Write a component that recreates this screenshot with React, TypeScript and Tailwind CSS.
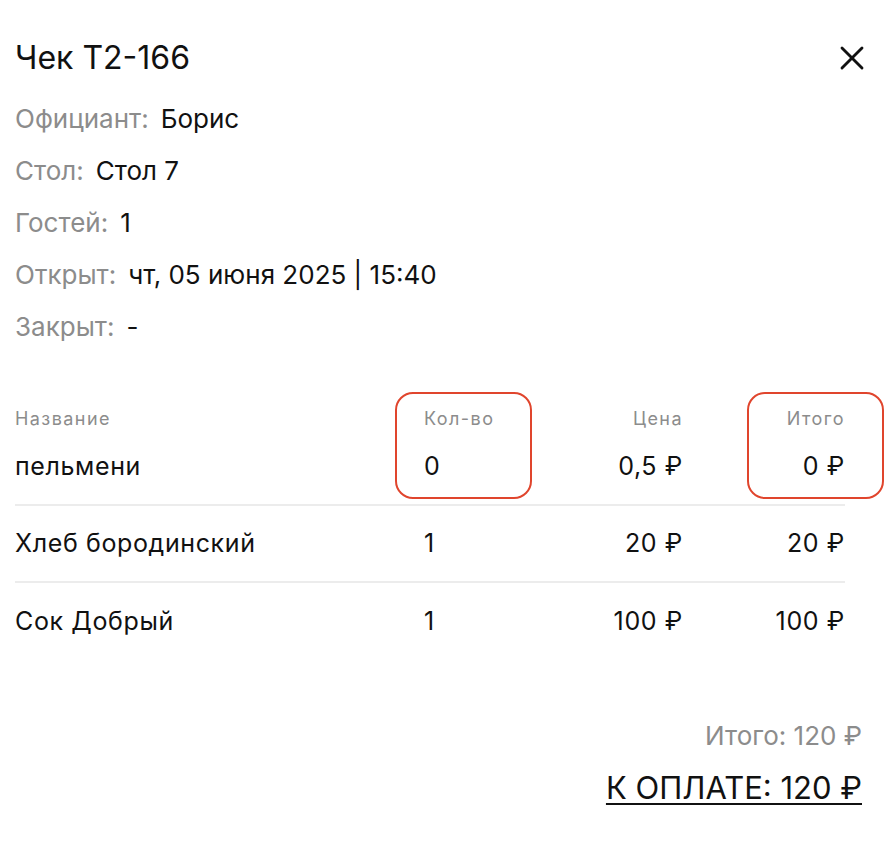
import { X } from 'lucide-react';

const info = [
  { label: 'Официант:', value: 'Борис' },
  { label: 'Стол:', value: 'Стол 7' },
  { label: 'Гостей:', value: '1' },
  { label: 'Открыт:', value: 'чт, 05 июня 2025 | 15:40' },
  { label: 'Закрыт:', value: '-' },
];

const items = [
  { name: 'пельмени', qty: '0', price: '0,5 ₽', total: '0 ₽' },
  { name: 'Хлеб бородинский', qty: '1', price: '20 ₽', total: '20 ₽' },
  { name: 'Сок Добрый', qty: '1', price: '100 ₽', total: '100 ₽' },
];

export default function App() {
  return (
    <div
      className="relative min-h-[854px] w-[886px] bg-white px-[15px] pt-[38px] text-[#111]"
      style={{ fontFamily: 'Inter, "Noto Sans", sans-serif' }}
    >
      {/* Header */}
      <div className="flex h-10 items-center justify-between">
        <h1 className="text-[32px] leading-10">Чек Т2-166</h1>
        <button className="-mr-[1px] text-[#111]" aria-label="Закрыть">
          <X size={40} strokeWidth={1.7} />
        </button>
      </div>

      {/* Meta info */}
      <div className="mt-[14px] flex flex-col">
        {info.map((row) => (
          <div key={row.label} className="flex h-[52px] items-center gap-3 text-[26px]">
            <span className="text-[#8c8c8c]">{row.label}</span>
            <span>{row.value}</span>
          </div>
        ))}
      </div>

      {/* Items table */}
      <div className="relative mt-[53px] w-[830px]">
        <div className="grid h-6 grid-cols-[409px_139px_120px_1fr] items-center text-[18px] tracking-[0.08em] text-[#8c8c8c]">
          <span>Название</span>
          <span>Кол-во</span>
          <span className="text-right">Цена</span>
          <span className="text-right">Итого</span>
        </div>
        {items.map((item, i) => (
          <div
            key={item.name}
            className={[
              'grid h-[77px] grid-cols-[409px_139px_120px_1fr] items-center text-[25px] tracking-wide',
              i < items.length - 1 ? 'border-b-2 border-[#ececec]' : '',
            ].join(' ')}
          >
            <span>{item.name}</span>
            <span>{item.qty}</span>
            <span className="text-right">{item.price}</span>
            <span className="text-right">{item.total}</span>
          </div>
        ))}

        {/* Highlight annotations */}
        <div className="pointer-events-none absolute left-[380px] top-[-13px] h-[107px] w-[137px] rounded-[18px] border-[2.5px] border-[#e0452d]" />
        <div className="pointer-events-none absolute left-[732px] top-[-13px] h-[107px] w-[137px] rounded-[18px] border-[2.5px] border-[#e0452d]" />
      </div>

      {/* Totals */}
      <div className="mt-[58px] flex flex-col items-end pr-[9px]">
        <div className="text-[26px] leading-9 text-[#8c8c8c]">Итого: 120 ₽</div>
        <div className="mt-[14px] text-[31px] leading-10 underline decoration-2 underline-offset-4">К ОПЛАТЕ: 120 ₽</div>
      </div>
    </div>
  );
}
